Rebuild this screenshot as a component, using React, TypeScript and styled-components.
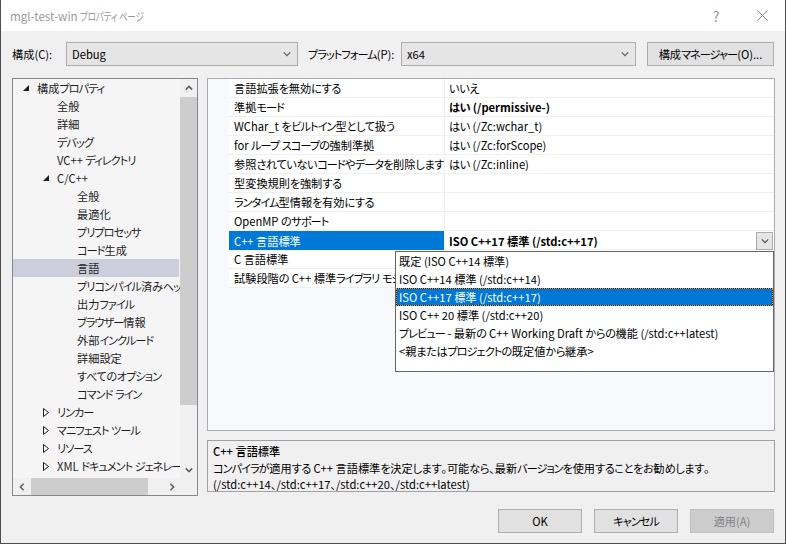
import React from 'react';
import styled, { createGlobalStyle } from 'styled-components';

const GlobalStyle = createGlobalStyle`
  html, body { margin: 0; padding: 0; background: #f0f0f0; }
  body {
    font-family: "Noto Sans CJK JP", "Noto Sans", sans-serif;
    font-size: 11.2px;
    color: #000;
    font-feature-settings: "palt";
  }
  * { box-sizing: border-box; }
`;

const Kana = styled.span<{ $kata?: boolean }>`
  letter-spacing: ${(p) => (p.$kata ? '-1px' : '-0.4px')};
`;

const KANA = /([\u30A0-\u30FF]+|[\u3041-\u309F]+)/;
const jp = (s: string) =>
  s.split(KANA).map((part, i) =>
    i % 2 === 1 ? (
      <Kana key={i} $kata={/[\u30A0-\u30FF]/.test(part)}>
        {part}
      </Kana>
    ) : (
      part
    ),
  );

const Window = styled.div`
  width: 786px;
  height: 544px;
  border: 1px solid #4d4d4d;
  border-top: none;
  background: #f0f0f0;
  display: flex;
  flex-direction: column;
  overflow: hidden;
`;

const TitleBar = styled.div`
  height: 31px;
  background: #fff;
  display: flex;
  align-items: center;
  padding-left: 9px;
`;

const TitleText = styled.div`
  flex: 1;
  color: #999;
  font-size: 11.6px;
  line-height: 16px;
  white-space: pre;
`;

const TitleKana = styled.span`
  display: inline-block;
  transform: scaleX(0.74);
  transform-origin: left center;
  letter-spacing: -0.3px;
`;

const CaptionButton = styled.div`
  width: 46px;
  height: 31px;
  display: flex;
  align-items: center;
  justify-content: center;
  color: #999;
  font-size: 14px;
`;

const Body = styled.div`
  flex: 1;
  display: flex;
  flex-direction: column;
  padding: 11px 10px 0 11px;
`;

const Toolbar = styled.div`
  height: 24px;
  display: flex;
  align-items: center;
`;

const Label = styled.div<{ $w: number; $ml?: number }>`
  width: ${(p) => p.$w}px;
  margin-left: ${(p) => p.$ml ?? 0}px;
  white-space: nowrap;
  line-height: 16px;
`;

const Combo = styled.div<{ $w: number }>`
  width: ${(p) => p.$w}px;
  height: 24px;
  background: #e5e5e5;
  border: 1px solid #adadad;
  display: flex;
  align-items: center;
  padding: 0 6px 0 5px;
`;

const ComboText = styled.div`
  flex: 1;
  line-height: 16px;
`;

const PushButton = styled.div<{ $w: number; $ml?: number; $disabled?: boolean }>`
  width: ${(p) => p.$w}px;
  margin-left: ${(p) => p.$ml ?? 0}px;
  height: 24px;
  background: ${(p) => (p.$disabled ? '#cccccc' : '#e1e1e1')};
  border: 1px solid ${(p) => (p.$disabled ? '#bfbfbf' : '#adadad')};
  color: ${(p) => (p.$disabled ? '#838383' : '#000')};
  display: flex;
  align-items: center;
  justify-content: center;
  line-height: 16px;
  white-space: nowrap;
`;

const Main = styled.div`
  margin-top: 12px;
  height: 418px;
  display: grid;
  grid-template-columns: 186px 1fr;
  column-gap: 9px;
`;

const TreePanel = styled.div`
  border: 1px solid #828790;
  background: #f5f5f5;
  display: grid;
  grid-template-columns: 1fr 17px;
  grid-template-rows: 1fr 17px;
  overflow: hidden;
`;

const TreeList = styled.div`
  overflow: hidden;
  display: flex;
  flex-direction: column;
`;

const TreeRow = styled.div<{ $indent: number; $selected?: boolean }>`
  flex: none;
  height: 18px;
  display: flex;
  align-items: center;
  padding-left: ${(p) => p.$indent}px;
  margin-right: 1px;
  background: ${(p) => (p.$selected ? '#cccedb' : 'transparent')};
  white-space: nowrap;
  color: #1e1e1e;
`;

const Expander = styled.div`
  width: 16px;
  height: 18px;
  flex: none;
  display: flex;
  align-items: center;
  padding-left: 2px;
`;

const TreeText = styled.span`
  line-height: 16px;
`;

const ScrollTrack = styled.div<{ $vertical?: boolean }>`
  background: #f0f0f0;
  display: flex;
  flex-direction: ${(p) => (p.$vertical ? 'column' : 'row')};
`;

const ScrollArrow = styled.div`
  width: 17px;
  height: 17px;
  flex: none;
  display: flex;
  align-items: center;
  justify-content: center;
`;

const Thumb = styled.div<{ $vertical?: boolean; $len: number }>`
  background: #cdcdcd;
  flex: none;
  ${(p) =>
    p.$vertical
      ? `width: 17px; height: ${p.$len}px; margin-top: 1px;`
      : `height: 17px; width: ${p.$len}px; margin-left: 1px;`}
`;

const Spacer = styled.div`
  flex: 1;
`;

const Corner = styled.div`
  background: #f0f0f0;
`;

const RightColumn = styled.div`
  display: flex;
  flex-direction: column;
  gap: 9px;
`;

const GridPanel = styled.div`
  position: relative;
  height: 353px;
  border: 1px solid #abadb3;
  background: #f7f9fd;
  padding-left: 21px;
  display: flex;
  flex-direction: column;
`;

const PropRow = styled.div`
  height: 19px;
  flex: none;
  display: grid;
  grid-template-columns: 216px 1fr;
  background: #fff;
  border-bottom: 1px solid #f0f0f0;
`;

const NameCell = styled.div<{ $selected?: boolean }>`
  border-right: 1px solid #f0f0f0;
  padding-left: 5px;
  display: flex;
  align-items: center;
  white-space: pre;
  overflow: hidden;
  line-height: 16px;
  background: ${(p) => (p.$selected ? '#0078d7' : '#fff')};
  color: ${(p) => (p.$selected ? '#fff' : '#000')};
`;

const ValueCell = styled.div<{ $bold?: boolean }>`
  padding-left: 4px;
  display: flex;
  align-items: center;
  white-space: pre;
  line-height: 16px;
  font-weight: ${(p) => (p.$bold ? 700 : 400)};
`;

const ValueText = styled.span`
  flex: 1;
`;

const DropButton = styled.div`
  width: 17px;
  height: 18px;
  margin-right: 1px;
  margin-top: 1px;
  background: #e5e5e5;
  border: 1px solid #adadad;
  display: flex;
  align-items: center;
  justify-content: center;
`;

const DropList = styled.div`
  position: absolute;
  left: 187px;
  top: 172px;
  width: 379px;
  height: 121px;
  background: #fff;
  border: 1px solid #646464;
  display: flex;
  flex-direction: column;
`;

const DropItem = styled.div<{ $selected?: boolean }>`
  position: relative;
  height: 18px;
  flex: none;
  display: flex;
  align-items: center;
  padding-left: 3px;
  white-space: pre;
  line-height: 16px;
  background: ${(p) => (p.$selected ? '#0078d7' : '#fff')};
  color: ${(p) => (p.$selected ? '#fff' : '#000')};
  ${(p) =>
    p.$selected
      ? `
    border: 1px solid #1a1a1a;
    padding-left: 2px;
    &::after {
      content: '';
      position: absolute;
      inset: -1px;
      border: 1px dotted #e9a13a;
    }`
      : ''}
`;

const Description = styled.div`
  height: 52px;
  border: 1px solid #a0a0a0;
  background: #f0f0f0;
  padding: 2px 5px 0 5px;
  line-height: 16.5px;
`;

const DescTitle = styled.div`
  font-weight: 500;
`;

const DescLine = styled.div`
  white-space: pre;
`;

const Footer = styled.div`
  margin-top: 13px;
  display: flex;
  justify-content: flex-end;
  padding-right: 1px;
`;

const Chevron = ({ dir, color = '#606060', w = 8, sw = 1.2 }: { dir: 'up' | 'down' | 'left' | 'right'; color?: string; w?: number; sw?: number }) => {
  const pts: Record<string, string> = {
    down: '1,3 5,7 9,3',
    up: '1,7 5,3 9,7',
    left: '7,1 3,5 7,9',
    right: '3,1 7,5 3,9',
  };
  return (
    <svg width={w} height={w} viewBox="0 0 10 10">
      <polyline points={pts[dir]} fill="none" stroke={color} strokeWidth={sw * (10 / w)} />
    </svg>
  );
};

const ExpandedIcon = () => (
  <svg width="6" height="6" viewBox="0 0 6 6">
    <polygon points="6,0 6,6 0,6" fill="#1e1e1e" />
  </svg>
);

const CollapsedIcon = () => (
  <svg width="6" height="9" viewBox="0 0 6 9">
    <polygon points="0.5,0.5 5.5,4.5 0.5,8.5" fill="none" stroke="#1e1e1e" strokeWidth="1" />
  </svg>
);

type TreeItem = { text: string; level: number; state?: 'open' | 'closed'; selected?: boolean };

const tree: TreeItem[] = [
  { text: '構成プロパティ', level: 0, state: 'open' },
  { text: '全般', level: 1 },
  { text: '詳細', level: 1 },
  { text: 'デバッグ', level: 1 },
  { text: 'VC++ ディレクトリ', level: 1 },
  { text: 'C/C++', level: 1, state: 'open' },
  { text: '全般', level: 2 },
  { text: '最適化', level: 2 },
  { text: 'プリプロセッサ', level: 2 },
  { text: 'コード生成', level: 2 },
  { text: '言語', level: 2, selected: true },
  { text: 'プリコンパイル済みヘッダー', level: 2 },
  { text: '出力ファイル', level: 2 },
  { text: 'ブラウザー情報', level: 2 },
  { text: '外部インクルード', level: 2 },
  { text: '詳細設定', level: 2 },
  { text: 'すべてのオプション', level: 2 },
  { text: 'コマンド ライン', level: 2 },
  { text: 'リンカー', level: 1, state: 'closed' },
  { text: 'マニフェスト ツール', level: 1, state: 'closed' },
  { text: 'リソース', level: 1, state: 'closed' },
  { text: 'XML ドキュメント ジェネレーター', level: 1, state: 'closed' },
  { text: 'ビルド イベント', level: 1, state: 'closed' },
];

const indents = [8, 28, 48];

type Prop = { name: string; value?: string; bold?: boolean; selected?: boolean };

const props: Prop[] = [
  { name: '言語拡張を無効にする', value: 'いいえ' },
  { name: '準拠モード', value: 'はい (/permissive-)', bold: true },
  { name: 'WChar_t をビルトイン型として扱う', value: 'はい (/Zc:wchar_t)' },
  { name: 'for ループ スコープの強制準拠', value: 'はい (/Zc:forScope)' },
  { name: '参照されていないコードやデータを削除します', value: 'はい (/Zc:inline)' },
  { name: '型変換規則を強制する' },
  { name: 'ランタイム型情報を有効にする' },
  { name: 'OpenMP のサポート' },
  { name: 'C++ 言語標準', value: 'ISO C++17 標準 (/std:c++17)', bold: true, selected: true },
  { name: 'C 言語標準' },
  { name: '試験段階の C++ 標準ライブラリ モジュールを有効にする' },
];

const options = [
  '既定 (ISO C++14 標準)',
  'ISO C++14 標準 (/std:c++14)',
  'ISO C++17 標準 (/std:c++17)',
  'ISO C++ 20 標準 (/std:c++20)',
  'プレビュー - 最新の C++ Working Draft からの機能 (/std:c++latest)',
  '<親またはプロジェクトの既定値から継承>',
];

export default function App() {
  return (
    <>
      <GlobalStyle />
      <Window>
        <TitleBar>
          <TitleText>
            mgl-test-win <TitleKana>プロパティ ページ</TitleKana>
          </TitleText>
          <CaptionButton>?</CaptionButton>
          <CaptionButton>
            <svg width="11" height="11" viewBox="0 0 11 11">
              <path d="M0.5 0.5 L10.5 10.5 M10.5 0.5 L0.5 10.5" stroke="#8a8a8a" strokeWidth="1" />
            </svg>
          </CaptionButton>
        </TitleBar>
        <Body>
          <Toolbar>
            <Label $w={54}>構成(C):</Label>
            <Combo $w={232}>
              <ComboText>Debug</ComboText>
              <Chevron dir="down" />
            </Combo>
            <Label $w={93} $ml={10}>{jp('プラットフォーム(P):')}</Label>
            <Combo $w={235}>
              <ComboText>x64</ComboText>
              <Chevron dir="down" />
            </Combo>
            <PushButton $w={127} $ml={11}>{jp('構成マネージャー(O)...')}</PushButton>
          </Toolbar>
          <Main>
            <TreePanel>
              <TreeList>
                {tree.map((t, i) => (
                  <TreeRow key={i} $indent={indents[t.level]} $selected={t.selected}>
                    <Expander>
                      {t.state === 'open' && <ExpandedIcon />}
                      {t.state === 'closed' && <CollapsedIcon />}
                    </Expander>
                    <TreeText>{jp(t.text)}</TreeText>
                  </TreeRow>
                ))}
              </TreeList>
              <ScrollTrack $vertical>
                <ScrollArrow>
                  <Chevron dir="up" sw={1.6} />
                </ScrollArrow>
                <Thumb $vertical $len={308} />
                <Spacer />
                <ScrollArrow>
                  <Chevron dir="down" sw={1.6} />
                </ScrollArrow>
              </ScrollTrack>
              <ScrollTrack>
                <ScrollArrow>
                  <Chevron dir="left" sw={1.6} />
                </ScrollArrow>
                <Thumb $len={117} />
                <Spacer />
                <ScrollArrow>
                  <Chevron dir="right" sw={1.6} />
                </ScrollArrow>
              </ScrollTrack>
              <Corner />
            </TreePanel>
            <RightColumn>
              <GridPanel>
                {props.map((p, i) => (
                  <PropRow key={i}>
                    <NameCell $selected={p.selected}>
                      <span>{jp(p.name)}</span>
                    </NameCell>
                    <ValueCell $bold={p.bold}>
                      <ValueText>{jp(p.value ?? '')}</ValueText>
                      {p.selected && (
                        <DropButton>
                          <Chevron dir="down" color="#505050" />
                        </DropButton>
                      )}
                    </ValueCell>
                  </PropRow>
                ))}
                <DropList>
                  {options.map((o, i) => (
                    <DropItem key={i} $selected={i === 2}>
                      <span>{jp(o)}</span>
                    </DropItem>
                  ))}
                </DropList>
              </GridPanel>
              <Description>
                <DescTitle>C++ 言語標準</DescTitle>
                <DescLine>
                  {jp('コンパイラが適用する C++ 言語標準を決定します。可能なら、最新バージョンを使用することをお勧めします。')}
                </DescLine>
                <DescLine>(/std:c++14、/std:c++17、/std:c++20、/std:c++latest)</DescLine>
              </Description>
            </RightColumn>
          </Main>
          <Footer>
            <PushButton $w={84}>OK</PushButton>
            <PushButton $w={84} $ml={12}>{jp('キャンセル')}</PushButton>
            <PushButton $w={84} $ml={12} $disabled>適用(A)</PushButton>
          </Footer>
        </Body>
      </Window>
    </>
  );
}
